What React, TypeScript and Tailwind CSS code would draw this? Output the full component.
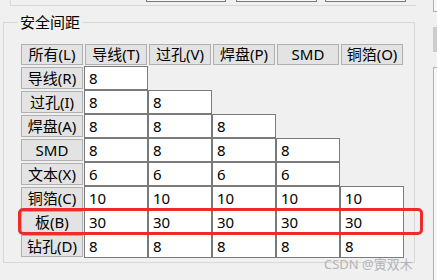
import React from 'react';

const cols = ['导线(T)', '过孔(V)', '焊盘(P)', 'SMD', '铜箔(O)'];

const rows: { label: string; values: string[] }[] = [
  { label: '导线(R)', values: ['8'] },
  { label: '过孔(I)', values: ['8', '8'] },
  { label: '焊盘(A)', values: ['8', '8', '8'] },
  { label: 'SMD', values: ['8', '8', '8', '8'] },
  { label: '文本(X)', values: ['6', '6', '6', '6'] },
  { label: '铜箔(C)', values: ['10', '10', '10', '10', '10'] },
  { label: '板(B)', values: ['30', '30', '30', '30', '30'] },
  { label: '钻孔(D)', values: ['8', '8', '8', '8', '8'] },
];

function HeadButton({ text }: { text: string }) {
  return (
    <div className="w-[64px] h-full p-[1px]">
      <div className="w-full h-full flex items-center justify-center bg-[#e3e3e3] border border-[#b0b0b0] text-[15px] leading-none text-black">
        {text}
      </div>
    </div>
  );
}

function Cell({ value }: { value: string }) {
  return (
    <div className="w-[64px] h-full flex items-center bg-white border border-[#7a7a7a] pl-[4px] text-[15px] leading-none text-black">
      {value}
    </div>
  );
}

function App() {
  return (
    <div className="w-[437px] h-[280px] bg-[#f0f0f0] flex overflow-hidden font-['Noto_Sans','Noto_Sans_CJK_SC',sans-serif]">
      <div className="w-[433px] flex flex-col">
        {/* top panel, only its lower edge is visible */}
        <div className="ml-[10px] w-[406px] h-[6px] border-l border-b border-[#d8d8d8] flex items-start">
          <div className="ml-[135px] w-[80px] h-[2px] border-x border-b border-[#7a7a7a] bg-[#f7f7f7]" />
          <div className="ml-[10px] w-[81px] h-[2px] border-x border-b border-[#7a7a7a] bg-[#f7f7f7]" />
          <div className="ml-[8px] w-[81px] h-[2px] border-x border-b border-[#7a7a7a] bg-[#f7f7f7]" />
        </div>

        {/* group box */}
        <div className="relative ml-[3px] mt-[16px] w-[412px] h-[241px] border border-[#d8d8d8] pl-[16px] pt-[20px]">
          <div className="absolute left-[14px] top-[-11px] px-[2px] bg-[#f0f0f0] text-[15px] leading-[20px] text-black">
            安全间距
          </div>

          <div className="flex flex-col">
            <div className="flex h-[23px]">
              <HeadButton text="所有(L)" />
              {cols.map((c) => (
                <HeadButton key={c} text={c} />
              ))}
            </div>
            {rows.map((r) => (
              <div key={r.label} className="flex h-[24px]">
                <HeadButton text={r.label} />
                {r.values.map((v, i) => (
                  <Cell key={i} value={v} />
                ))}
              </div>
            ))}
          </div>

          {/* highlight around the 板 row */}
          <div className="absolute left-[14px] top-[185px] w-[405px] h-[27px] border-[3px] border-[#ee2b2b] rounded-[5px]" />

          <div className="absolute left-[320px] top-[235px] text-[13px] leading-[13px] text-[#b4b4b4] whitespace-nowrap">
            CSDN @寅双木
          </div>
        </div>
      </div>

      {/* right edge of neighbouring controls */}
      <div className="w-[4px] flex flex-col">
        <div className="h-[12px] border-l border-b border-[#b0b0b0] bg-[#f7f7f7]" />
        <div className="mt-[15px] h-[25px] bg-[#cdcdcd]" />
        <div className="mt-[15px] flex-1 border-l border-t border-[#b0b0b0] bg-[#f7f7f7]" />
      </div>
    </div>
  );
}

export default App;
